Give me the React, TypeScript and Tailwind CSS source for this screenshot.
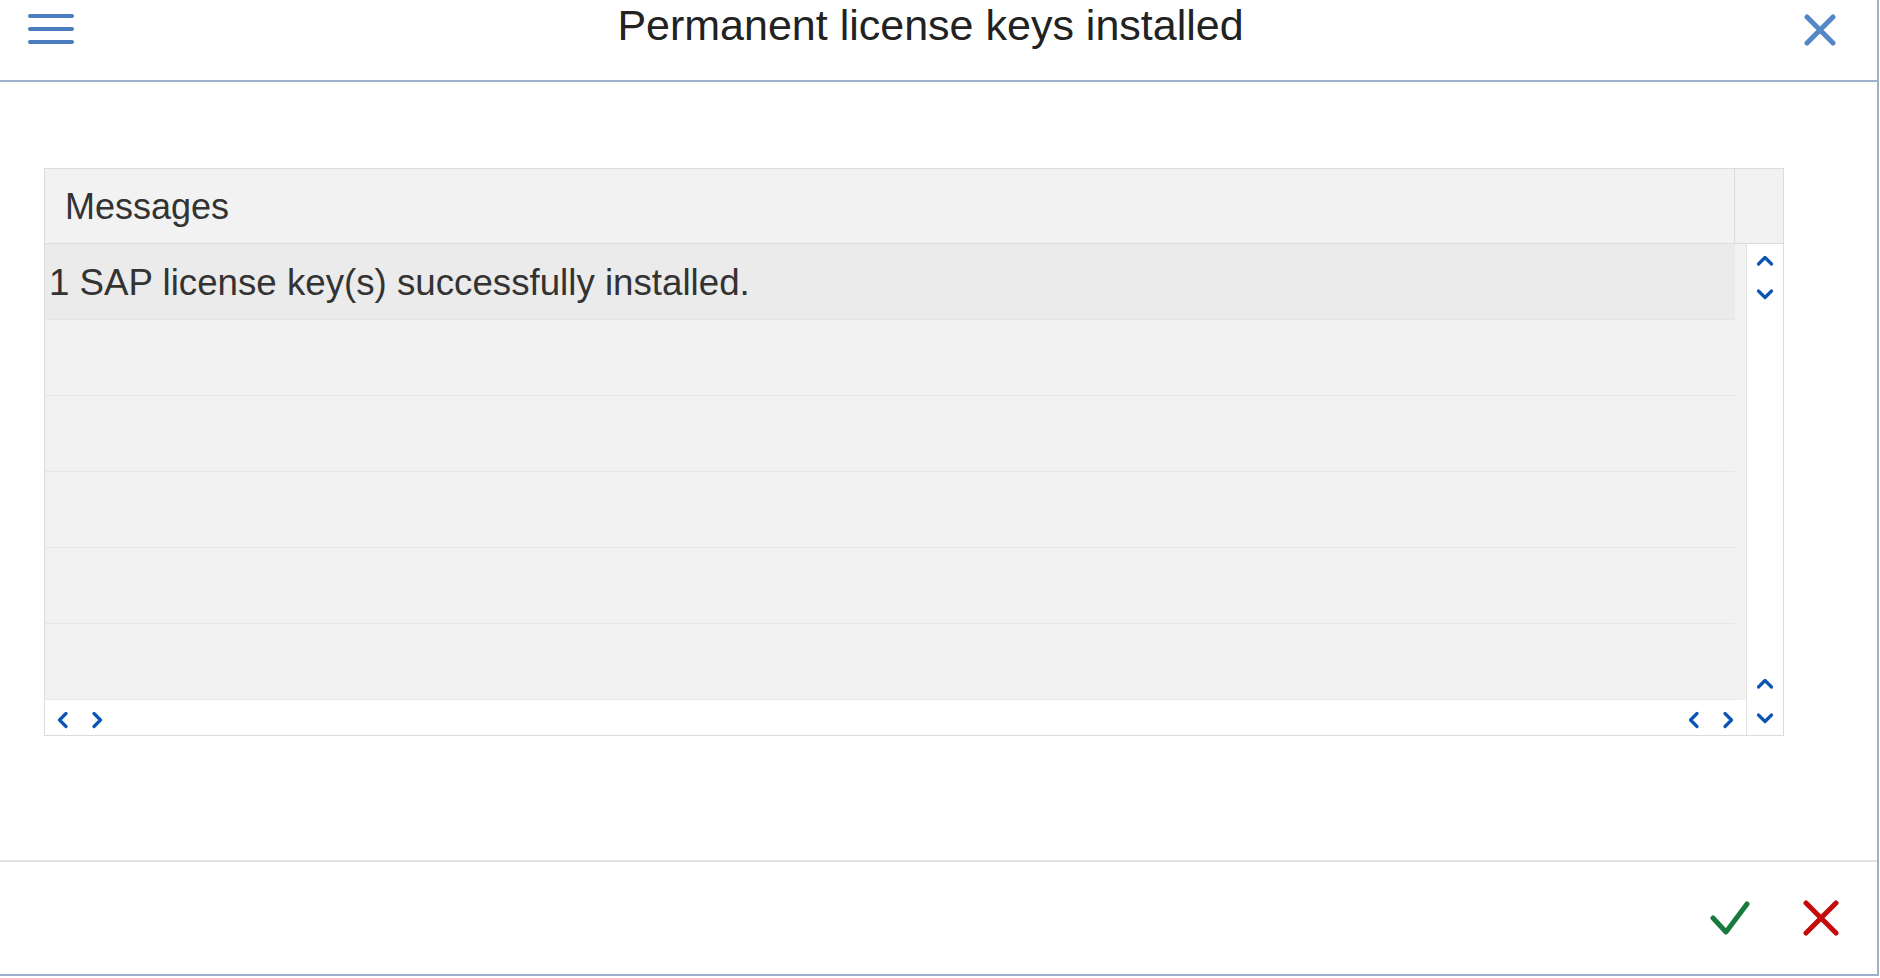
import React from 'react';

const font = { fontFamily: '"Liberation Sans", Arial, sans-serif' };

function Chevron({ dir }: { dir: 'up' | 'down' | 'left' | 'right' }) {
  const paths = {
    up: 'M2.5 10 L9 3.5 L15.5 10',
    down: 'M2.5 3 L9 9.5 L15.5 3',
    left: 'M10 2.5 L3.5 9 L10 15.5',
    right: 'M3 2.5 L9.5 9 L3 15.5',
  };
  const vertical = dir === 'up' || dir === 'down';
  return (
    <svg
      width={vertical ? 18 : 13}
      height={vertical ? 13 : 18}
      viewBox={vertical ? '0 0 18 13' : '0 0 13 18'}
      fill="none"
      stroke="#0b54b4"
      strokeWidth="3.2"
      strokeLinecap="round"
      strokeLinejoin="round"
    >
      <path d={paths[dir]} />
    </svg>
  );
}

function Header() {
  return (
    <header className="flex h-[82px] shrink-0 items-start border-b-2 border-[#9db2cd]">
      <div className="flex w-[74px] flex-col gap-[9px] pt-[14px] pl-[28px]">
        <span className="block h-[4px] w-[46px] rounded-full bg-[#4a7dbd]" />
        <span className="block h-[4px] w-[46px] rounded-full bg-[#4a7dbd]" />
        <span className="block h-[4px] w-[46px] rounded-full bg-[#4a7dbd]" />
      </div>
      <h1 className="mr-[16px] flex-1 pt-[4px] text-center text-[43px] leading-[43px] font-normal text-[#222]">
        Permanent license keys installed
      </h1>
      <div className="flex w-[74px] pt-[14px]">
        <svg width="34" height="32" viewBox="0 0 34 32" fill="none" stroke="#5487c5" strokeWidth="5" strokeLinecap="round">
          <path d="M4 3 L30 29 M30 3 L4 29" />
        </svg>
      </div>
    </header>
  );
}

function MessagesTable() {
  const rows = ['1 SAP license key(s) successfully installed.', '', '', '', '', ''];
  return (
    <div className="flex h-[568px] w-[1740px] flex-col border border-[#dcdcdc] bg-white">
      <div className="flex h-[75px] shrink-0 border-b border-[#dcdcdc] bg-[#f2f2f2]">
        <div className="flex w-[1690px] items-center border-r border-[#dcdcdc] pt-[2px] pl-[20px] text-[36px] leading-none text-[#333]">
          Messages
        </div>
        <div className="flex-1" />
      </div>
      <div className="flex flex-1">
        <div className="flex w-[1702px] flex-col border-r border-[#e3e3e3]">
          <div className="flex flex-col bg-[#f2f2f2]">
            {rows.map((text, i) => (
              <div
                key={i}
                className={`flex h-[76px] w-[1690px] items-center border-b border-[#e6e6e6] pt-[4px] pl-[4px] text-[36.7px] leading-none text-[#333] ${
                  i === 0 ? 'bg-[#ebebeb]' : 'bg-[#f1f1f1]'
                }`}
              >
                {text}
              </div>
            ))}
          </div>
          <div className="flex flex-1 items-center justify-between px-[11px] pt-[4px]">
            <div className="flex gap-[22px]">
              <Chevron dir="left" />
              <Chevron dir="right" />
            </div>
            <div className="flex gap-[22px]">
              <Chevron dir="left" />
              <Chevron dir="right" />
            </div>
          </div>
        </div>
        <div className="flex flex-1 flex-col items-center justify-between pt-[10px] pb-[10px]">
          <div className="flex flex-col items-center gap-[21px]">
            <Chevron dir="up" />
            <Chevron dir="down" />
          </div>
          <div className="flex flex-col items-center gap-[22px]">
            <Chevron dir="up" />
            <Chevron dir="down" />
          </div>
        </div>
      </div>
    </div>
  );
}

function Footer() {
  return (
    <footer className="flex h-[114px] shrink-0 items-center justify-end gap-[52px] border-t-2 border-[#e2e2e2] pr-[37px]">
      <svg width="40" height="36" viewBox="0 0 40 36" fill="none" stroke="#197a3e" strokeWidth="5" strokeLinecap="round" strokeLinejoin="round">
        <path d="M3 18 L16 32 L37 4" />
      </svg>
      <svg width="38" height="36" viewBox="0 0 38 36" fill="none" stroke="#c40b0b" strokeWidth="5" strokeLinecap="round">
        <path d="M4 3 L34 33 M34 3 L4 33" />
      </svg>
    </footer>
  );
}

export default function App() {
  return (
    <div className="h-[978px] w-[1880px] overflow-hidden bg-white" style={font}>
      <div className="flex h-[976px] w-[1879px] flex-col border-r-2 border-b-2 border-[#9ab0cc]">
        <Header />
        <main className="flex-1 pt-[86px] pl-[44px]">
          <MessagesTable />
        </main>
        <Footer />
      </div>
    </div>
  );
}
